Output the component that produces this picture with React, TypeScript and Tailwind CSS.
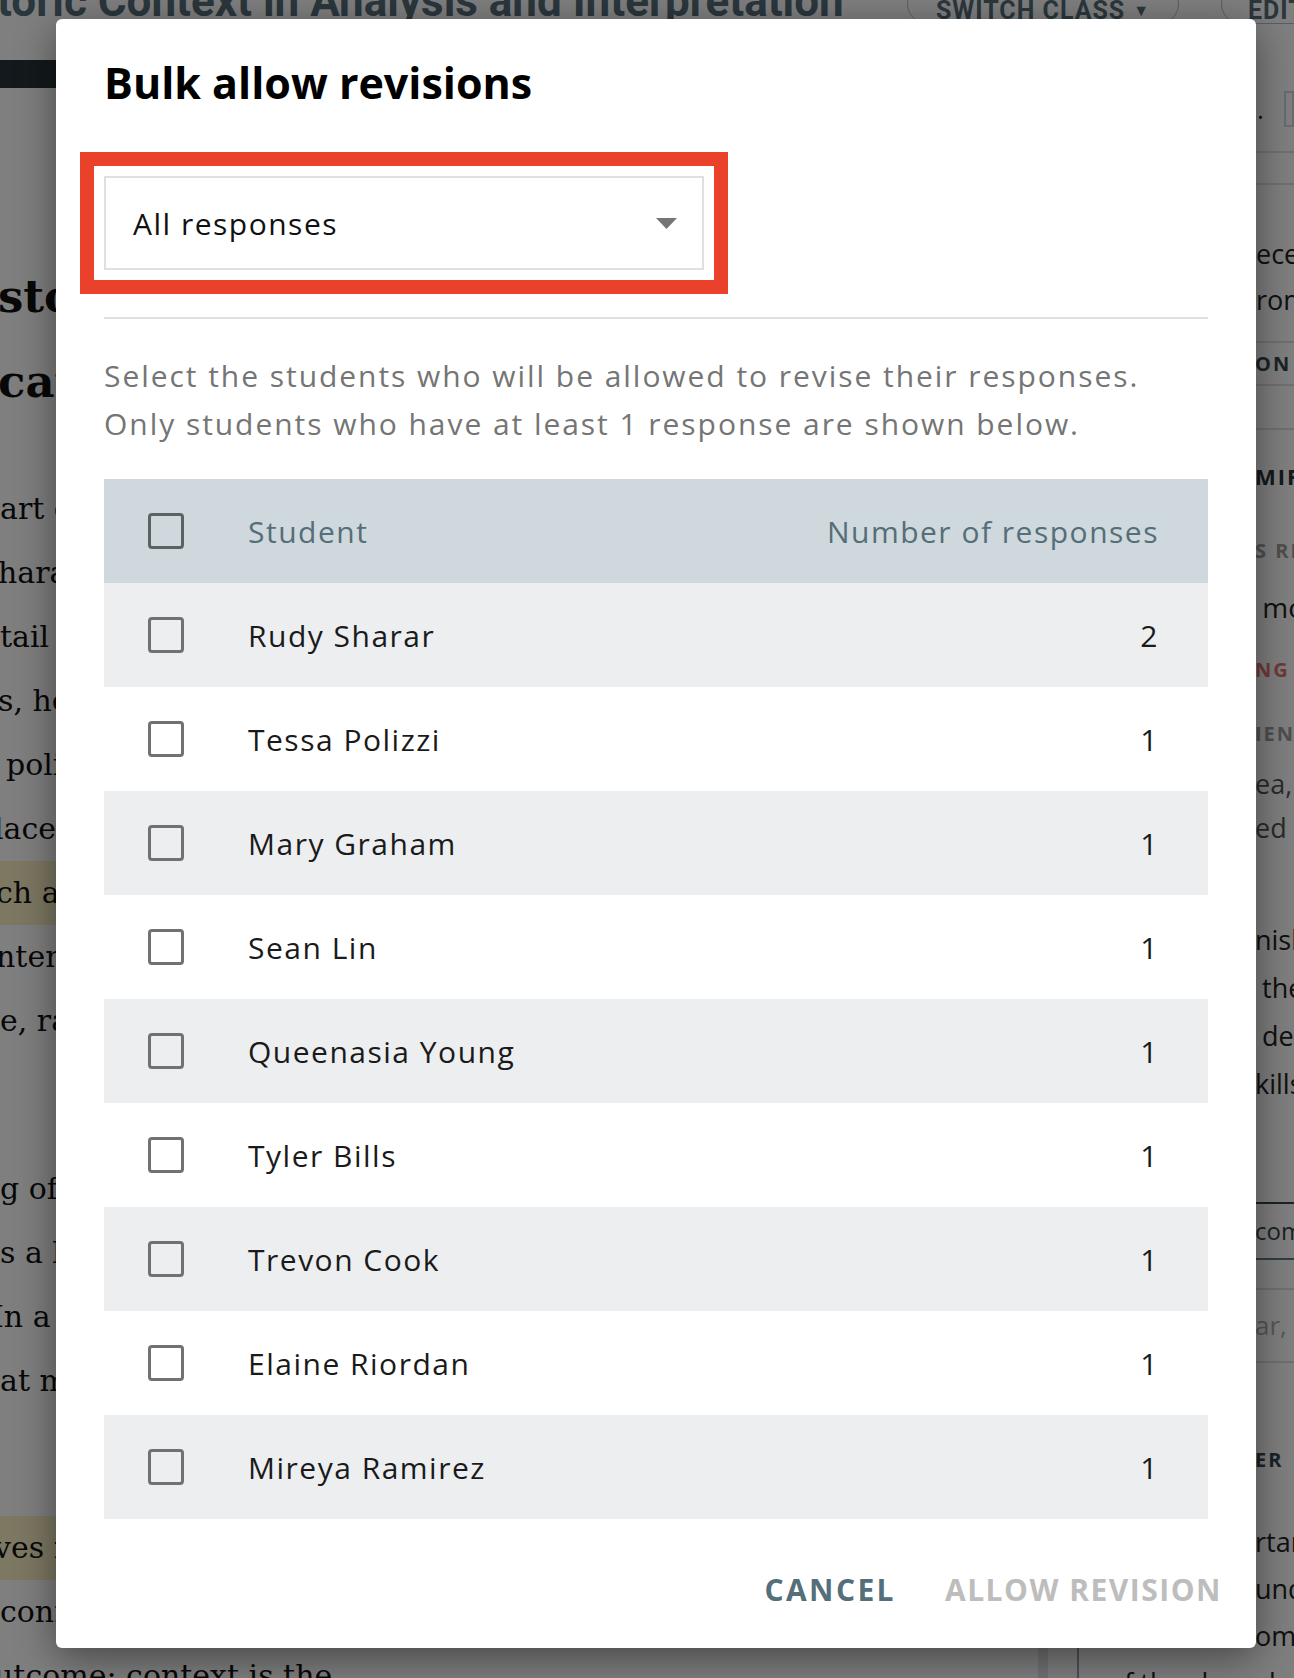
import React from "react";

const students = [
  { name: "Rudy Sharar", count: 2 },
  { name: "Tessa Polizzi", count: 1 },
  { name: "Mary Graham", count: 1 },
  { name: "Sean Lin", count: 1 },
  { name: "Queenasia Young", count: 1 },
  { name: "Tyler Bills", count: 1 },
  { name: "Trevon Cook", count: 1 },
  { name: "Elaine Riordan", count: 1 },
  { name: "Mireya Ramirez", count: 1 },
];

function Checkbox({ dark }: { dark?: boolean }) {
  return (
    <span
      className={`block h-[36px] w-[36px] shrink-0 rounded-[4px] border-[3px] ${
        dark ? "border-[#5c6166]" : "border-[#717171]"
      }`}
    />
  );
}

// the lesson page that sits behind the dimmed overlay
function PageBehind() {
  return (
    <div className="flex h-full flex-col overflow-hidden bg-white">
      {/* top bar */}
      <header className="flex h-[40px] shrink-0 items-start overflow-hidden">
        <h1 className="-ml-[3px] -mt-[21px] w-[906px] shrink-0 whitespace-nowrap font-['Roboto',sans-serif] text-[44px] font-bold leading-[44px] text-[#546e7a]">
          toric Context in Analysis and Interpretation
        </h1>
        <div className="-mt-[16px] ml-[4px] flex h-[40px] w-[272px] shrink-0 items-center justify-center gap-[8px] rounded-full border border-[#b0bec5] pt-[14px] font-['Roboto',sans-serif] text-[25px] font-bold tracking-[1px] text-[#546e7a]">
          SWITCH CLASS
          <span className="text-[16px]">▼</span>
        </div>
        <div className="-mt-[16px] ml-[42px] flex h-[40px] w-[120px] shrink-0 items-center rounded-full border border-[#b0bec5] pl-[26px] pt-[14px] font-['Roboto',sans-serif] text-[25px] font-bold tracking-[1px] text-[#546e7a]">
          EDIT
        </div>
      </header>

      <div className="flex flex-1">
        {/* lesson text */}
        <main className="w-[1038px] shrink-0 overflow-hidden font-['DejaVu_Serif',serif] text-[#111]">
          <div className="mt-[20px] h-[28px] bg-[#263238]" />
          <div className="mt-[166px] text-[45px] font-bold leading-[85px]">
            <div className="-ml-[2px] whitespace-nowrap">storic Context in</div>
            <div className="-ml-[2px] whitespace-nowrap">cation and Analysis</div>
          </div>
          <div className="mt-[53px] text-[30px] leading-[64px]">
            <div className="whitespace-nowrap">art of the historical record, the</div>
            <div className="-ml-[2px] whitespace-nowrap">haracter of the period shapes</div>
            <div className="whitespace-nowrap">tail that a reader notices first</div>
            <div className="-ml-[2px] whitespace-nowrap">s, how people lived and worked</div>
            <div className="pl-[6px] whitespace-nowrap">political and social pressures</div>
            <div className="-ml-[6px] whitespace-nowrap">laces and events of the time</div>
            <div className="-ml-[4px] whitespace-nowrap bg-[#fbf1c4]">ch a custom of the day</div>
            <div className="-ml-[4px] whitespace-nowrap">ntended meaning of the author</div>
            <div className="whitespace-nowrap">e, race, and class in the story</div>
          </div>
          <div className="mt-[104px] text-[30px] leading-[64px]">
            <div className="whitespace-nowrap">g of a text changes when it is</div>
            <div className="whitespace-nowrap">s a bridge between the reader</div>
            <div className="-ml-[8px] whitespace-nowrap">In a close reading, students</div>
            <div className="whitespace-nowrap">at matters most in the passage</div>
          </div>
          <div className="mt-[103px] text-[30px] leading-[64px]">
            <div className="-ml-[6px] whitespace-nowrap bg-[#fbf1c4]">ves rise to a new interpretation</div>
            <div className="whitespace-nowrap">connects the text to the world</div>
            <div className="-ml-[6px] whitespace-nowrap">utcome: context is the</div>
          </div>
        </main>

        <div className="w-[39px] shrink-0 border-l-[10px] border-[#e3e6e8]" />

        {/* side panel */}
        <aside className="flex-1 overflow-hidden border-l-2 border-[#90a4ae] font-['Open_Sans',sans-serif] text-[#222]">
          <div className="flex h-[113px] items-center border-b-2 border-[#e0e0e0] pl-[178px] pt-[26px]">
            <span className="text-[26px] leading-none">.</span>
            <span className="ml-[20px] h-[36px] w-[40px] border-2 border-[#cfd8dc]" />
          </div>
          <div className="h-[32px] border-b-2 border-[#e0e0e0]" />
          <div className="h-[158px] border-b-2 border-[#e0e0e0] pl-[177px] pt-[46px] text-[27px] leading-[46px]">
            <div className="whitespace-nowrap">eceive feedback</div>
            <div className="whitespace-nowrap">rom your teacher</div>
          </div>
          <div className="flex h-[43px] items-center border-b-2 border-[#e0e0e0] pl-[176px] text-[20px] font-bold tracking-[2px] text-[#37474f]">
            <span className="whitespace-nowrap">ON ANSWERS</span>
          </div>
          <div className="h-[44px] border-b-2 border-[#e0e0e0]" />
          <div className="flex h-[92px] items-center pl-[176px] text-[22px] font-bold tracking-[2px] text-[#263238]">
            <span className="whitespace-nowrap">MIRROR</span>
          </div>
          <div className="flex h-[58px] items-center pl-[176px] text-[20px] font-bold tracking-[2px] text-[#9e9e9e]">
            <span className="whitespace-nowrap">S RESPONSES</span>
          </div>
          <div className="flex h-[54px] items-center pl-[176px] text-[28px]">
            <span className="whitespace-nowrap">&nbsp;more</span>
          </div>
          <div className="flex h-[72px] items-center pl-[176px] text-[20px] font-bold tracking-[2px] text-[#e57373]">
            <span className="whitespace-nowrap">NG</span>
          </div>
          <div className="flex h-[56px] items-center pl-[176px] text-[20px] font-bold tracking-[2px] text-[#9e9e9e]">
            <span className="whitespace-nowrap">IENT</span>
          </div>
          <div className="h-[88px] pl-[176px] text-[27px] leading-[44px] text-[#555]">
            <div className="whitespace-nowrap">ea, and</div>
            <div className="whitespace-nowrap">ed the</div>
          </div>
          <div className="mt-[66px] pl-[176px] text-[27px] leading-[48px]">
            <div className="whitespace-nowrap">nish</div>
            <div className="whitespace-nowrap">&nbsp;the</div>
            <div className="whitespace-nowrap">&nbsp;de</div>
            <div className="whitespace-nowrap">kills</div>
          </div>
          <div className="h-[96px] border-b-2 border-[#37474f]" />
          <div className="flex h-[56px] items-center border-b-2 border-[#607d8b] pl-[176px] text-[24px] text-[#37474f]">
            <span className="whitespace-nowrap">comments</span>
          </div>
          <div className="h-[28px]" />
          <div className="flex h-[75px] items-center border-y-2 border-[#e0e0e0] pl-[176px] text-[26px] text-[#b0b0b0]">
            <span className="whitespace-nowrap">ar, add a note</span>
          </div>
          <div className="h-[155px] pl-[176px] pt-[85px] text-[20px] font-bold leading-[24px] tracking-[2px] text-[#37474f]">
            <span className="whitespace-nowrap">ER</span>
          </div>
          <div className="pl-[176px] text-[27px] leading-[47px]">
            <div className="whitespace-nowrap">rtant</div>
            <div className="whitespace-nowrap">und</div>
            <div className="whitespace-nowrap">om</div>
          </div>
          <div className="pl-[29px] text-[27px] leading-[47px]">
            <div className="whitespace-nowrap">of the shared</div>
          </div>
        </aside>
      </div>
    </div>
  );
}

export default function App() {
  return (
    <div className="relative h-[1678px] w-[1294px] overflow-hidden">
      <PageBehind />

      {/* dim overlay */}
      <div className="absolute inset-0 bg-black/50" />

      {/* dialog */}
      <div className="absolute left-[56px] top-[19px] flex h-[1629px] w-[1200px] flex-col rounded-[6px] bg-white px-[48px] pt-[40px] font-['Open_Sans',sans-serif] shadow-[0_10px_40px_rgba(0,0,0,0.45)]">
        <h2 className="text-[43px] font-bold leading-[48px] text-black">
          Bulk allow revisions
        </h2>

        {/* highlighted select */}
        <div className="-ml-[24px] mt-[45px] w-fit border-[14px] border-[#e9412a] p-[10px]">
          <div className="flex h-[94px] w-[600px] items-center justify-between border-2 border-[#e0e0e0] pl-[27px] pr-[25px]">
            <span className="text-[30px] tracking-[0.05em] text-[#111]">
              All responses
            </span>
            <svg width="21" height="11" viewBox="0 0 21 11">
              <path d="M0 0 L21 0 L10.5 11 Z" fill="#757575" />
            </svg>
          </div>
        </div>

        <div className="mt-[23px] h-[2px] bg-[#e0e0e0]" />

        <p className="mt-[33px] text-[30px] leading-[48px] tracking-[0.065em] text-[#757575]">
          Select the students who will be allowed to revise their responses.
          <br />
          Only students who have at least 1 response are shown below.
        </p>

        {/* students table */}
        <div className="mt-[31px] text-[30px] tracking-[0.05em]">
          <div className="flex h-[104px] items-center bg-[#cfd8dc] pl-[44px] pr-[49px] text-[#546e7a]">
            <Checkbox dark />
            <span className="ml-[64px] flex-1">Student</span>
            <span>Number of responses</span>
          </div>
          {students.map((s, i) => (
            <div
              key={s.name}
              className={`flex h-[104px] items-center pl-[44px] pr-[49px] text-[#1a1a1a] ${
                i % 2 === 0 ? "bg-[#eceef0]" : "bg-white"
              }`}
            >
              <Checkbox />
              <span className="ml-[64px] flex-1">{s.name}</span>
              <span>{s.count}</span>
            </div>
          ))}
        </div>

        {/* actions */}
        <div className="-mr-[14px] mt-[51px] flex justify-end gap-[49px] text-[30px] font-bold leading-[40px] tracking-[0.05em]">
          <button className="tracking-[0.08em] text-[#546e7a]">CANCEL</button>
          <button className="text-[#bdbdbd]">ALLOW REVISION</button>
        </div>
      </div>
    </div>
  );
}
